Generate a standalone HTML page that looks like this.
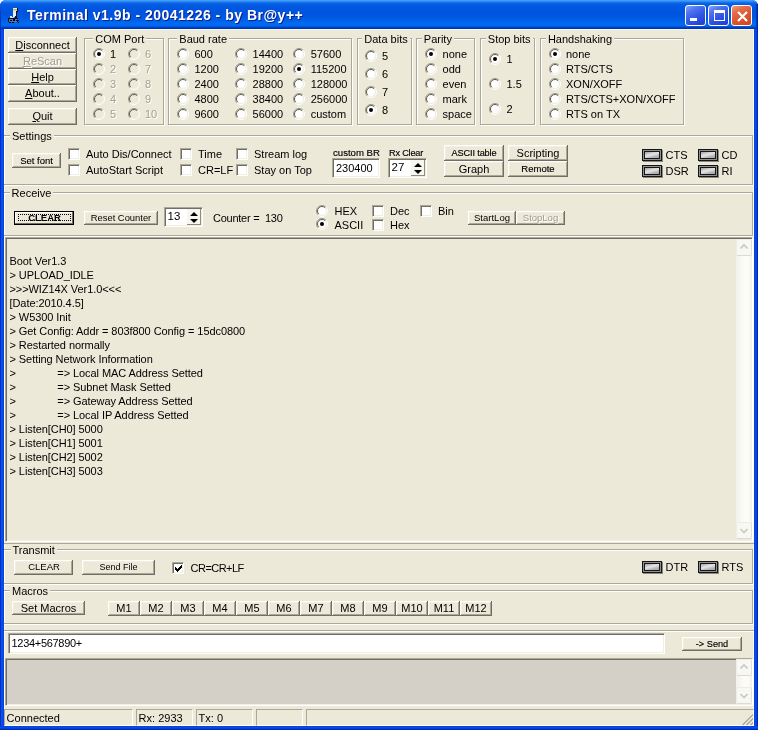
<!DOCTYPE html><html><head><meta charset="utf-8"><style>
*{margin:0;padding:0;box-sizing:border-box}
html,body{width:758px;height:730px;overflow:hidden;background:#fff}
body{position:relative;font-family:'Liberation Sans', sans-serif;font-size:11px;color:#000}
div{position:absolute}
.t{white-space:pre;line-height:14px}
.gb{border:1px solid #ACA899;box-shadow:1px 1px 0 #fff, inset 1px 1px 0 #fff}
.gl{background:#ECE9D8;padding:0 2px;line-height:11px;height:11px;white-space:pre}
.btn{background:#ECE9D8;box-shadow:inset -1px -1px 0 #716F64, inset 1px 1px 0 #fff, inset -2px -2px 0 #ACA899, inset 2px 2px 0 #F1EFE2;text-align:center;white-space:pre}
.rs{position:absolute}
.rad{width:12px;height:12px;border-radius:50%;background:#fff;box-shadow:inset 1px 1px 0 #716F64;border:1px solid;border-color:#ACA899 #fff #fff #ACA899}
.rdot{left:3px;top:3px;width:4px;height:4px;border-radius:50%;background:#000}
.chk{width:12px;height:12px;background:#fff;border:1px solid;border-color:#ACA899 #fff #fff #ACA899;box-shadow:inset 1px 1px 0 #716F64, inset -1px -1px 0 #F1EFE2}
.ed{border:1px solid;border-color:#ACA899 #fff #fff #ACA899;box-shadow:inset 1px 1px 0 #716F64, inset -1px -1px 0 #F1EFE2;overflow:hidden}
.spn{background:#F7F6F1;box-shadow:inset -1px -1px 0 #8E8C80}
.led{background:#141414;box-shadow:1px 1px 0 rgba(40,40,40,0.5)}
.ledi{left:1px;top:1px;right:1px;bottom:1px;border:1px solid #909090;background:linear-gradient(165deg,#8c8c8c 0%,#c8c8c8 30%,#e6e6e6 45%,#b4b4b4 70%,#a0a0a0 100%);box-shadow:inset 0 0 0 1px #181818}
.u{text-decoration:underline}
</style></head><body>
<div id="root" style="left:0;top:0;width:758px;height:730px;will-change:transform">

<div style="left:0;top:0;width:758px;height:730px;background:#0831D9;border-radius:6px 6px 0 0"></div>
<div style="left:0;top:0;width:758px;height:29px;border-radius:6px 6px 0 0;background:linear-gradient(#4AA3FA 0px,#3A95F8 1px,#1470EC 2.5px,#065DE3 4px,#0057E0 8px,#0053DC 13px,#0057E0 17px,#0063EA 21px,#006CF2 24px,#0066EC 26px,#0040C4 27.5px,#0030A8 29px)"></div>
<div style="left:4px;top:29px;width:750px;height:697px;background:#ECE9D8;box-shadow:inset 1px 1px 0 #FAF9F4, inset -1px -1px 0 #FAF9F4"></div>
<div style="left:0;top:4px;width:1px;height:25px;background:linear-gradient(#1a5ae8,#0838C8 40%,#0030B8)"></div>
<div style="left:756px;top:4px;width:2px;height:25px;background:linear-gradient(90deg,#0040D0,#0020A0)"></div>
<svg style="position:absolute;left:4px;top:4px" width="22" height="22" viewBox="0 0 22 22" shape-rendering="crispEdges">
<rect x="9" y="4" width="4" height="1" fill="#D8F0F8"/>
<rect x="9" y="5" width="4" height="1" fill="#C8B860"/>
<rect x="9" y="6" width="4" height="1" fill="#E8D8A0"/>
<rect x="9" y="7" width="3" height="2" fill="#F0E8D8"/>
<rect x="13" y="4" width="1" height="4" fill="#101028"/>
<rect x="12" y="7" width="1" height="5" fill="#101028"/>
<rect x="9" y="9" width="3" height="4" fill="#E8F0F8"/>
<rect x="11" y="12" width="2" height="2" fill="#101028"/>
<rect x="6" y="13" width="4" height="1" fill="#C8D8E8"/>
<rect x="4" y="14" width="10" height="1" fill="#101028"/>
<rect x="4" y="15" width="1" height="3" fill="#101028"/>
<rect x="5" y="15" width="8" height="3" fill="#5878A8"/>
<rect x="6" y="16" width="2" height="1" fill="#000018"/>
<rect x="9" y="15" width="2" height="2" fill="#000018"/>
<rect x="12" y="16" width="3" height="1" fill="#101028"/>
<rect x="13" y="17" width="1" height="1" fill="#000018"/>
<rect x="5" y="18" width="2" height="1" fill="#000018"/>
<rect x="8" y="18" width="2" height="1" fill="#000018"/>
<rect x="14" y="18" width="1" height="1" fill="#000018"/>
<rect x="6" y="12" width="2" height="1" fill="#E0E8F0"/>
</svg>
<div class="t" style="left:27px;top:6px;font-size:14px;letter-spacing:0.5px;font-weight:bold;color:#fff;line-height:18px;text-shadow:1px 1px 0 #0A1E8C">Terminal v1.9b - 20041226 - by Br@y++</div>
<div style="left:685px;top:5px;width:21px;height:21px;border:1px solid #fff;border-radius:3px;background:linear-gradient(150deg,#8AA6F8 0%,#5276F0 25%,#3258E6 55%,#2446DA 85%,#2040D0 100%)"><div style="left:4px;top:12px;width:7px;height:3px;background:#fff"></div></div>
<div style="left:708px;top:5px;width:21px;height:21px;border:1px solid #fff;border-radius:3px;background:linear-gradient(150deg,#8AA6F8 0%,#5276F0 25%,#3258E6 55%,#2446DA 85%,#2040D0 100%)"><div style="left:5px;top:4px;width:11px;height:11px;border:1px solid #fff;border-top-width:3px"></div></div>
<div style="left:731px;top:5px;width:21px;height:21px;border:1px solid #fff;border-radius:3px;background:linear-gradient(150deg,#F0A080 0%,#E6704C 25%,#DC5632 55%,#CC4420 100%)"><svg width="21" height="21" style="position:absolute;left:0;top:0"><path d="M6 6 L15 15 M15 6 L6 15" stroke="#fff" stroke-width="2.2"/></svg></div>
<div class="btn" style="left:8px;top:37px;width:69px;height:16px;line-height:16px;font-size:11px;color:#000;"><span class="u">D</span>isconnect</div>
<div class="btn" style="left:8px;top:53px;width:69px;height:16px;line-height:16px;font-size:11px;color:#A09D90;text-shadow:1px 1px #fff;"><span class="u">R</span>eScan</div>
<div class="btn" style="left:8px;top:69px;width:69px;height:16px;line-height:16px;font-size:11px;color:#000;"><span class="u">H</span>elp</div>
<div class="btn" style="left:8px;top:85px;width:69px;height:17px;line-height:17px;font-size:11px;color:#000;"><span class="u">A</span>bout..</div>
<div class="btn" style="left:8px;top:108px;width:69px;height:17px;line-height:17px;font-size:11px;color:#000;"><span class="u">Q</span>uit</div>
<div class="gb" style="left:84px;top:38px;width:80px;height:87px"></div>
<div class="gl" style="left:93.3px;top:34.2px">COM Port</div>
<svg class="rs" style="left:93px;top:48px" width="12" height="12"><circle cx="6" cy="6" r="4.5" fill="#fff"/><path d="M2.1 9.9A5.5 5.5 0 0 1 9.9 2.1" stroke="#9C998C" fill="none"/><path d="M2.8 9.2A4.5 4.5 0 0 1 9.2 2.8" stroke="#5F5D53" fill="none"/><path d="M9.9 2.1A5.5 5.5 0 0 1 2.1 9.9" stroke="#fff" fill="none"/><path d="M9.2 2.8A4.5 4.5 0 0 1 2.8 9.2" stroke="#F1EFE2" fill="none"/><circle cx="6" cy="6" r="2" fill="#000"/></svg>
<div class="t" style="left:110px;top:46.8px;line-height:14px;font-size:11px;color:#000;">1</div>
<svg class="rs" style="left:128px;top:48px" width="12" height="12"><circle cx="6" cy="6" r="4.5" fill="#ECE9D8"/><path d="M2.1 9.9A5.5 5.5 0 0 1 9.9 2.1" stroke="#9C998C" fill="none"/><path d="M2.8 9.2A4.5 4.5 0 0 1 9.2 2.8" stroke="#5F5D53" fill="none"/><path d="M9.9 2.1A5.5 5.5 0 0 1 2.1 9.9" stroke="#fff" fill="none"/><path d="M9.2 2.8A4.5 4.5 0 0 1 2.8 9.2" stroke="#F1EFE2" fill="none"/></svg>
<div class="t" style="left:145px;top:46.8px;line-height:14px;font-size:11px;color:#A5A295;text-shadow:1px 1px #fff">6</div>
<svg class="rs" style="left:93px;top:63px" width="12" height="12"><circle cx="6" cy="6" r="4.5" fill="#ECE9D8"/><path d="M2.1 9.9A5.5 5.5 0 0 1 9.9 2.1" stroke="#9C998C" fill="none"/><path d="M2.8 9.2A4.5 4.5 0 0 1 9.2 2.8" stroke="#5F5D53" fill="none"/><path d="M9.9 2.1A5.5 5.5 0 0 1 2.1 9.9" stroke="#fff" fill="none"/><path d="M9.2 2.8A4.5 4.5 0 0 1 2.8 9.2" stroke="#F1EFE2" fill="none"/></svg>
<div class="t" style="left:110px;top:61.8px;line-height:14px;font-size:11px;color:#A5A295;text-shadow:1px 1px #fff">2</div>
<svg class="rs" style="left:128px;top:63px" width="12" height="12"><circle cx="6" cy="6" r="4.5" fill="#ECE9D8"/><path d="M2.1 9.9A5.5 5.5 0 0 1 9.9 2.1" stroke="#9C998C" fill="none"/><path d="M2.8 9.2A4.5 4.5 0 0 1 9.2 2.8" stroke="#5F5D53" fill="none"/><path d="M9.9 2.1A5.5 5.5 0 0 1 2.1 9.9" stroke="#fff" fill="none"/><path d="M9.2 2.8A4.5 4.5 0 0 1 2.8 9.2" stroke="#F1EFE2" fill="none"/></svg>
<div class="t" style="left:145px;top:61.8px;line-height:14px;font-size:11px;color:#A5A295;text-shadow:1px 1px #fff">7</div>
<svg class="rs" style="left:93px;top:78px" width="12" height="12"><circle cx="6" cy="6" r="4.5" fill="#ECE9D8"/><path d="M2.1 9.9A5.5 5.5 0 0 1 9.9 2.1" stroke="#9C998C" fill="none"/><path d="M2.8 9.2A4.5 4.5 0 0 1 9.2 2.8" stroke="#5F5D53" fill="none"/><path d="M9.9 2.1A5.5 5.5 0 0 1 2.1 9.9" stroke="#fff" fill="none"/><path d="M9.2 2.8A4.5 4.5 0 0 1 2.8 9.2" stroke="#F1EFE2" fill="none"/></svg>
<div class="t" style="left:110px;top:76.7px;line-height:14px;font-size:11px;color:#A5A295;text-shadow:1px 1px #fff">3</div>
<svg class="rs" style="left:128px;top:78px" width="12" height="12"><circle cx="6" cy="6" r="4.5" fill="#ECE9D8"/><path d="M2.1 9.9A5.5 5.5 0 0 1 9.9 2.1" stroke="#9C998C" fill="none"/><path d="M2.8 9.2A4.5 4.5 0 0 1 9.2 2.8" stroke="#5F5D53" fill="none"/><path d="M9.9 2.1A5.5 5.5 0 0 1 2.1 9.9" stroke="#fff" fill="none"/><path d="M9.2 2.8A4.5 4.5 0 0 1 2.8 9.2" stroke="#F1EFE2" fill="none"/></svg>
<div class="t" style="left:145px;top:76.7px;line-height:14px;font-size:11px;color:#A5A295;text-shadow:1px 1px #fff">8</div>
<svg class="rs" style="left:93px;top:93px" width="12" height="12"><circle cx="6" cy="6" r="4.5" fill="#ECE9D8"/><path d="M2.1 9.9A5.5 5.5 0 0 1 9.9 2.1" stroke="#9C998C" fill="none"/><path d="M2.8 9.2A4.5 4.5 0 0 1 9.2 2.8" stroke="#5F5D53" fill="none"/><path d="M9.9 2.1A5.5 5.5 0 0 1 2.1 9.9" stroke="#fff" fill="none"/><path d="M9.2 2.8A4.5 4.5 0 0 1 2.8 9.2" stroke="#F1EFE2" fill="none"/></svg>
<div class="t" style="left:110px;top:91.6px;line-height:14px;font-size:11px;color:#A5A295;text-shadow:1px 1px #fff">4</div>
<svg class="rs" style="left:128px;top:93px" width="12" height="12"><circle cx="6" cy="6" r="4.5" fill="#ECE9D8"/><path d="M2.1 9.9A5.5 5.5 0 0 1 9.9 2.1" stroke="#9C998C" fill="none"/><path d="M2.8 9.2A4.5 4.5 0 0 1 9.2 2.8" stroke="#5F5D53" fill="none"/><path d="M9.9 2.1A5.5 5.5 0 0 1 2.1 9.9" stroke="#fff" fill="none"/><path d="M9.2 2.8A4.5 4.5 0 0 1 2.8 9.2" stroke="#F1EFE2" fill="none"/></svg>
<div class="t" style="left:145px;top:91.6px;line-height:14px;font-size:11px;color:#A5A295;text-shadow:1px 1px #fff">9</div>
<svg class="rs" style="left:93px;top:108px" width="12" height="12"><circle cx="6" cy="6" r="4.5" fill="#ECE9D8"/><path d="M2.1 9.9A5.5 5.5 0 0 1 9.9 2.1" stroke="#9C998C" fill="none"/><path d="M2.8 9.2A4.5 4.5 0 0 1 9.2 2.8" stroke="#5F5D53" fill="none"/><path d="M9.9 2.1A5.5 5.5 0 0 1 2.1 9.9" stroke="#fff" fill="none"/><path d="M9.2 2.8A4.5 4.5 0 0 1 2.8 9.2" stroke="#F1EFE2" fill="none"/></svg>
<div class="t" style="left:110px;top:106.5px;line-height:14px;font-size:11px;color:#A5A295;text-shadow:1px 1px #fff">5</div>
<svg class="rs" style="left:128px;top:108px" width="12" height="12"><circle cx="6" cy="6" r="4.5" fill="#ECE9D8"/><path d="M2.1 9.9A5.5 5.5 0 0 1 9.9 2.1" stroke="#9C998C" fill="none"/><path d="M2.8 9.2A4.5 4.5 0 0 1 9.2 2.8" stroke="#5F5D53" fill="none"/><path d="M9.9 2.1A5.5 5.5 0 0 1 2.1 9.9" stroke="#fff" fill="none"/><path d="M9.2 2.8A4.5 4.5 0 0 1 2.8 9.2" stroke="#F1EFE2" fill="none"/></svg>
<div class="t" style="left:145px;top:106.5px;line-height:14px;font-size:11px;color:#A5A295;text-shadow:1px 1px #fff">10</div>
<div class="gb" style="left:168px;top:38px;width:184px;height:87px"></div>
<div class="gl" style="left:177.3px;top:34.2px">Baud rate</div>
<svg class="rs" style="left:177px;top:48px" width="12" height="12"><circle cx="6" cy="6" r="4.5" fill="#fff"/><path d="M2.1 9.9A5.5 5.5 0 0 1 9.9 2.1" stroke="#9C998C" fill="none"/><path d="M2.8 9.2A4.5 4.5 0 0 1 9.2 2.8" stroke="#5F5D53" fill="none"/><path d="M9.9 2.1A5.5 5.5 0 0 1 2.1 9.9" stroke="#fff" fill="none"/><path d="M9.2 2.8A4.5 4.5 0 0 1 2.8 9.2" stroke="#F1EFE2" fill="none"/></svg>
<div class="t" style="left:194.5px;top:46.8px;line-height:14px;font-size:11px;color:#000;">600</div>
<svg class="rs" style="left:177px;top:63px" width="12" height="12"><circle cx="6" cy="6" r="4.5" fill="#fff"/><path d="M2.1 9.9A5.5 5.5 0 0 1 9.9 2.1" stroke="#9C998C" fill="none"/><path d="M2.8 9.2A4.5 4.5 0 0 1 9.2 2.8" stroke="#5F5D53" fill="none"/><path d="M9.9 2.1A5.5 5.5 0 0 1 2.1 9.9" stroke="#fff" fill="none"/><path d="M9.2 2.8A4.5 4.5 0 0 1 2.8 9.2" stroke="#F1EFE2" fill="none"/></svg>
<div class="t" style="left:194.5px;top:61.8px;line-height:14px;font-size:11px;color:#000;">1200</div>
<svg class="rs" style="left:177px;top:78px" width="12" height="12"><circle cx="6" cy="6" r="4.5" fill="#fff"/><path d="M2.1 9.9A5.5 5.5 0 0 1 9.9 2.1" stroke="#9C998C" fill="none"/><path d="M2.8 9.2A4.5 4.5 0 0 1 9.2 2.8" stroke="#5F5D53" fill="none"/><path d="M9.9 2.1A5.5 5.5 0 0 1 2.1 9.9" stroke="#fff" fill="none"/><path d="M9.2 2.8A4.5 4.5 0 0 1 2.8 9.2" stroke="#F1EFE2" fill="none"/></svg>
<div class="t" style="left:194.5px;top:76.7px;line-height:14px;font-size:11px;color:#000;">2400</div>
<svg class="rs" style="left:177px;top:93px" width="12" height="12"><circle cx="6" cy="6" r="4.5" fill="#fff"/><path d="M2.1 9.9A5.5 5.5 0 0 1 9.9 2.1" stroke="#9C998C" fill="none"/><path d="M2.8 9.2A4.5 4.5 0 0 1 9.2 2.8" stroke="#5F5D53" fill="none"/><path d="M9.9 2.1A5.5 5.5 0 0 1 2.1 9.9" stroke="#fff" fill="none"/><path d="M9.2 2.8A4.5 4.5 0 0 1 2.8 9.2" stroke="#F1EFE2" fill="none"/></svg>
<div class="t" style="left:194.5px;top:91.6px;line-height:14px;font-size:11px;color:#000;">4800</div>
<svg class="rs" style="left:177px;top:108px" width="12" height="12"><circle cx="6" cy="6" r="4.5" fill="#fff"/><path d="M2.1 9.9A5.5 5.5 0 0 1 9.9 2.1" stroke="#9C998C" fill="none"/><path d="M2.8 9.2A4.5 4.5 0 0 1 9.2 2.8" stroke="#5F5D53" fill="none"/><path d="M9.9 2.1A5.5 5.5 0 0 1 2.1 9.9" stroke="#fff" fill="none"/><path d="M9.2 2.8A4.5 4.5 0 0 1 2.8 9.2" stroke="#F1EFE2" fill="none"/></svg>
<div class="t" style="left:194.5px;top:106.5px;line-height:14px;font-size:11px;color:#000;">9600</div>
<svg class="rs" style="left:235px;top:48px" width="12" height="12"><circle cx="6" cy="6" r="4.5" fill="#fff"/><path d="M2.1 9.9A5.5 5.5 0 0 1 9.9 2.1" stroke="#9C998C" fill="none"/><path d="M2.8 9.2A4.5 4.5 0 0 1 9.2 2.8" stroke="#5F5D53" fill="none"/><path d="M9.9 2.1A5.5 5.5 0 0 1 2.1 9.9" stroke="#fff" fill="none"/><path d="M9.2 2.8A4.5 4.5 0 0 1 2.8 9.2" stroke="#F1EFE2" fill="none"/></svg>
<div class="t" style="left:252.6px;top:46.8px;line-height:14px;font-size:11px;color:#000;">14400</div>
<svg class="rs" style="left:235px;top:63px" width="12" height="12"><circle cx="6" cy="6" r="4.5" fill="#fff"/><path d="M2.1 9.9A5.5 5.5 0 0 1 9.9 2.1" stroke="#9C998C" fill="none"/><path d="M2.8 9.2A4.5 4.5 0 0 1 9.2 2.8" stroke="#5F5D53" fill="none"/><path d="M9.9 2.1A5.5 5.5 0 0 1 2.1 9.9" stroke="#fff" fill="none"/><path d="M9.2 2.8A4.5 4.5 0 0 1 2.8 9.2" stroke="#F1EFE2" fill="none"/></svg>
<div class="t" style="left:252.6px;top:61.8px;line-height:14px;font-size:11px;color:#000;">19200</div>
<svg class="rs" style="left:235px;top:78px" width="12" height="12"><circle cx="6" cy="6" r="4.5" fill="#fff"/><path d="M2.1 9.9A5.5 5.5 0 0 1 9.9 2.1" stroke="#9C998C" fill="none"/><path d="M2.8 9.2A4.5 4.5 0 0 1 9.2 2.8" stroke="#5F5D53" fill="none"/><path d="M9.9 2.1A5.5 5.5 0 0 1 2.1 9.9" stroke="#fff" fill="none"/><path d="M9.2 2.8A4.5 4.5 0 0 1 2.8 9.2" stroke="#F1EFE2" fill="none"/></svg>
<div class="t" style="left:252.6px;top:76.7px;line-height:14px;font-size:11px;color:#000;">28800</div>
<svg class="rs" style="left:235px;top:93px" width="12" height="12"><circle cx="6" cy="6" r="4.5" fill="#fff"/><path d="M2.1 9.9A5.5 5.5 0 0 1 9.9 2.1" stroke="#9C998C" fill="none"/><path d="M2.8 9.2A4.5 4.5 0 0 1 9.2 2.8" stroke="#5F5D53" fill="none"/><path d="M9.9 2.1A5.5 5.5 0 0 1 2.1 9.9" stroke="#fff" fill="none"/><path d="M9.2 2.8A4.5 4.5 0 0 1 2.8 9.2" stroke="#F1EFE2" fill="none"/></svg>
<div class="t" style="left:252.6px;top:91.6px;line-height:14px;font-size:11px;color:#000;">38400</div>
<svg class="rs" style="left:235px;top:108px" width="12" height="12"><circle cx="6" cy="6" r="4.5" fill="#fff"/><path d="M2.1 9.9A5.5 5.5 0 0 1 9.9 2.1" stroke="#9C998C" fill="none"/><path d="M2.8 9.2A4.5 4.5 0 0 1 9.2 2.8" stroke="#5F5D53" fill="none"/><path d="M9.9 2.1A5.5 5.5 0 0 1 2.1 9.9" stroke="#fff" fill="none"/><path d="M9.2 2.8A4.5 4.5 0 0 1 2.8 9.2" stroke="#F1EFE2" fill="none"/></svg>
<div class="t" style="left:252.6px;top:106.5px;line-height:14px;font-size:11px;color:#000;">56000</div>
<svg class="rs" style="left:293px;top:48px" width="12" height="12"><circle cx="6" cy="6" r="4.5" fill="#fff"/><path d="M2.1 9.9A5.5 5.5 0 0 1 9.9 2.1" stroke="#9C998C" fill="none"/><path d="M2.8 9.2A4.5 4.5 0 0 1 9.2 2.8" stroke="#5F5D53" fill="none"/><path d="M9.9 2.1A5.5 5.5 0 0 1 2.1 9.9" stroke="#fff" fill="none"/><path d="M9.2 2.8A4.5 4.5 0 0 1 2.8 9.2" stroke="#F1EFE2" fill="none"/></svg>
<div class="t" style="left:310.7px;top:46.8px;line-height:14px;font-size:11px;color:#000;">57600</div>
<svg class="rs" style="left:293px;top:63px" width="12" height="12"><circle cx="6" cy="6" r="4.5" fill="#fff"/><path d="M2.1 9.9A5.5 5.5 0 0 1 9.9 2.1" stroke="#9C998C" fill="none"/><path d="M2.8 9.2A4.5 4.5 0 0 1 9.2 2.8" stroke="#5F5D53" fill="none"/><path d="M9.9 2.1A5.5 5.5 0 0 1 2.1 9.9" stroke="#fff" fill="none"/><path d="M9.2 2.8A4.5 4.5 0 0 1 2.8 9.2" stroke="#F1EFE2" fill="none"/><circle cx="6" cy="6" r="2" fill="#000"/></svg>
<div class="t" style="left:310.7px;top:61.8px;line-height:14px;font-size:11px;color:#000;">115200</div>
<svg class="rs" style="left:293px;top:78px" width="12" height="12"><circle cx="6" cy="6" r="4.5" fill="#fff"/><path d="M2.1 9.9A5.5 5.5 0 0 1 9.9 2.1" stroke="#9C998C" fill="none"/><path d="M2.8 9.2A4.5 4.5 0 0 1 9.2 2.8" stroke="#5F5D53" fill="none"/><path d="M9.9 2.1A5.5 5.5 0 0 1 2.1 9.9" stroke="#fff" fill="none"/><path d="M9.2 2.8A4.5 4.5 0 0 1 2.8 9.2" stroke="#F1EFE2" fill="none"/></svg>
<div class="t" style="left:310.7px;top:76.7px;line-height:14px;font-size:11px;color:#000;">128000</div>
<svg class="rs" style="left:293px;top:93px" width="12" height="12"><circle cx="6" cy="6" r="4.5" fill="#fff"/><path d="M2.1 9.9A5.5 5.5 0 0 1 9.9 2.1" stroke="#9C998C" fill="none"/><path d="M2.8 9.2A4.5 4.5 0 0 1 9.2 2.8" stroke="#5F5D53" fill="none"/><path d="M9.9 2.1A5.5 5.5 0 0 1 2.1 9.9" stroke="#fff" fill="none"/><path d="M9.2 2.8A4.5 4.5 0 0 1 2.8 9.2" stroke="#F1EFE2" fill="none"/></svg>
<div class="t" style="left:310.7px;top:91.6px;line-height:14px;font-size:11px;color:#000;">256000</div>
<svg class="rs" style="left:293px;top:108px" width="12" height="12"><circle cx="6" cy="6" r="4.5" fill="#fff"/><path d="M2.1 9.9A5.5 5.5 0 0 1 9.9 2.1" stroke="#9C998C" fill="none"/><path d="M2.8 9.2A4.5 4.5 0 0 1 9.2 2.8" stroke="#5F5D53" fill="none"/><path d="M9.9 2.1A5.5 5.5 0 0 1 2.1 9.9" stroke="#fff" fill="none"/><path d="M9.2 2.8A4.5 4.5 0 0 1 2.8 9.2" stroke="#F1EFE2" fill="none"/></svg>
<div class="t" style="left:310.7px;top:106.5px;line-height:14px;font-size:11px;color:#000;">custom</div>
<div class="gb" style="left:357px;top:38px;width:55px;height:87px"></div>
<div class="gl" style="left:362.3px;top:34.2px">Data bits</div>
<svg class="rs" style="left:365px;top:50px" width="12" height="12"><circle cx="6" cy="6" r="4.5" fill="#fff"/><path d="M2.1 9.9A5.5 5.5 0 0 1 9.9 2.1" stroke="#9C998C" fill="none"/><path d="M2.8 9.2A4.5 4.5 0 0 1 9.2 2.8" stroke="#5F5D53" fill="none"/><path d="M9.9 2.1A5.5 5.5 0 0 1 2.1 9.9" stroke="#fff" fill="none"/><path d="M9.2 2.8A4.5 4.5 0 0 1 2.8 9.2" stroke="#F1EFE2" fill="none"/></svg>
<div class="t" style="left:382px;top:48.6px;line-height:14px;font-size:11px;color:#000;">5</div>
<svg class="rs" style="left:365px;top:68px" width="12" height="12"><circle cx="6" cy="6" r="4.5" fill="#fff"/><path d="M2.1 9.9A5.5 5.5 0 0 1 9.9 2.1" stroke="#9C998C" fill="none"/><path d="M2.8 9.2A4.5 4.5 0 0 1 9.2 2.8" stroke="#5F5D53" fill="none"/><path d="M9.9 2.1A5.5 5.5 0 0 1 2.1 9.9" stroke="#fff" fill="none"/><path d="M9.2 2.8A4.5 4.5 0 0 1 2.8 9.2" stroke="#F1EFE2" fill="none"/></svg>
<div class="t" style="left:382px;top:67.2px;line-height:14px;font-size:11px;color:#000;">6</div>
<svg class="rs" style="left:365px;top:86px" width="12" height="12"><circle cx="6" cy="6" r="4.5" fill="#fff"/><path d="M2.1 9.9A5.5 5.5 0 0 1 9.9 2.1" stroke="#9C998C" fill="none"/><path d="M2.8 9.2A4.5 4.5 0 0 1 9.2 2.8" stroke="#5F5D53" fill="none"/><path d="M9.9 2.1A5.5 5.5 0 0 1 2.1 9.9" stroke="#fff" fill="none"/><path d="M9.2 2.8A4.5 4.5 0 0 1 2.8 9.2" stroke="#F1EFE2" fill="none"/></svg>
<div class="t" style="left:382px;top:85.0px;line-height:14px;font-size:11px;color:#000;">7</div>
<svg class="rs" style="left:365px;top:104px" width="12" height="12"><circle cx="6" cy="6" r="4.5" fill="#fff"/><path d="M2.1 9.9A5.5 5.5 0 0 1 9.9 2.1" stroke="#9C998C" fill="none"/><path d="M2.8 9.2A4.5 4.5 0 0 1 9.2 2.8" stroke="#5F5D53" fill="none"/><path d="M9.9 2.1A5.5 5.5 0 0 1 2.1 9.9" stroke="#fff" fill="none"/><path d="M9.2 2.8A4.5 4.5 0 0 1 2.8 9.2" stroke="#F1EFE2" fill="none"/><circle cx="6" cy="6" r="2" fill="#000"/></svg>
<div class="t" style="left:382px;top:102.6px;line-height:14px;font-size:11px;color:#000;">8</div>
<div class="gb" style="left:416px;top:38px;width:59px;height:87px"></div>
<div class="gl" style="left:421.8px;top:34.2px">Parity</div>
<svg class="rs" style="left:425px;top:48px" width="12" height="12"><circle cx="6" cy="6" r="4.5" fill="#fff"/><path d="M2.1 9.9A5.5 5.5 0 0 1 9.9 2.1" stroke="#9C998C" fill="none"/><path d="M2.8 9.2A4.5 4.5 0 0 1 9.2 2.8" stroke="#5F5D53" fill="none"/><path d="M9.9 2.1A5.5 5.5 0 0 1 2.1 9.9" stroke="#fff" fill="none"/><path d="M9.2 2.8A4.5 4.5 0 0 1 2.8 9.2" stroke="#F1EFE2" fill="none"/><circle cx="6" cy="6" r="2" fill="#000"/></svg>
<div class="t" style="left:442.6px;top:46.8px;line-height:14px;font-size:11px;color:#000;">none</div>
<svg class="rs" style="left:425px;top:63px" width="12" height="12"><circle cx="6" cy="6" r="4.5" fill="#fff"/><path d="M2.1 9.9A5.5 5.5 0 0 1 9.9 2.1" stroke="#9C998C" fill="none"/><path d="M2.8 9.2A4.5 4.5 0 0 1 9.2 2.8" stroke="#5F5D53" fill="none"/><path d="M9.9 2.1A5.5 5.5 0 0 1 2.1 9.9" stroke="#fff" fill="none"/><path d="M9.2 2.8A4.5 4.5 0 0 1 2.8 9.2" stroke="#F1EFE2" fill="none"/></svg>
<div class="t" style="left:442.6px;top:61.8px;line-height:14px;font-size:11px;color:#000;">odd</div>
<svg class="rs" style="left:425px;top:78px" width="12" height="12"><circle cx="6" cy="6" r="4.5" fill="#fff"/><path d="M2.1 9.9A5.5 5.5 0 0 1 9.9 2.1" stroke="#9C998C" fill="none"/><path d="M2.8 9.2A4.5 4.5 0 0 1 9.2 2.8" stroke="#5F5D53" fill="none"/><path d="M9.9 2.1A5.5 5.5 0 0 1 2.1 9.9" stroke="#fff" fill="none"/><path d="M9.2 2.8A4.5 4.5 0 0 1 2.8 9.2" stroke="#F1EFE2" fill="none"/></svg>
<div class="t" style="left:442.6px;top:76.7px;line-height:14px;font-size:11px;color:#000;">even</div>
<svg class="rs" style="left:425px;top:93px" width="12" height="12"><circle cx="6" cy="6" r="4.5" fill="#fff"/><path d="M2.1 9.9A5.5 5.5 0 0 1 9.9 2.1" stroke="#9C998C" fill="none"/><path d="M2.8 9.2A4.5 4.5 0 0 1 9.2 2.8" stroke="#5F5D53" fill="none"/><path d="M9.9 2.1A5.5 5.5 0 0 1 2.1 9.9" stroke="#fff" fill="none"/><path d="M9.2 2.8A4.5 4.5 0 0 1 2.8 9.2" stroke="#F1EFE2" fill="none"/></svg>
<div class="t" style="left:442.6px;top:91.6px;line-height:14px;font-size:11px;color:#000;">mark</div>
<svg class="rs" style="left:425px;top:108px" width="12" height="12"><circle cx="6" cy="6" r="4.5" fill="#fff"/><path d="M2.1 9.9A5.5 5.5 0 0 1 9.9 2.1" stroke="#9C998C" fill="none"/><path d="M2.8 9.2A4.5 4.5 0 0 1 9.2 2.8" stroke="#5F5D53" fill="none"/><path d="M9.9 2.1A5.5 5.5 0 0 1 2.1 9.9" stroke="#fff" fill="none"/><path d="M9.2 2.8A4.5 4.5 0 0 1 2.8 9.2" stroke="#F1EFE2" fill="none"/></svg>
<div class="t" style="left:442.6px;top:106.5px;line-height:14px;font-size:11px;color:#000;">space</div>
<div class="gb" style="left:480px;top:38px;width:55px;height:87px"></div>
<div class="gl" style="left:485.8px;top:34.2px">Stop bits</div>
<svg class="rs" style="left:489px;top:53px" width="12" height="12"><circle cx="6" cy="6" r="4.5" fill="#fff"/><path d="M2.1 9.9A5.5 5.5 0 0 1 9.9 2.1" stroke="#9C998C" fill="none"/><path d="M2.8 9.2A4.5 4.5 0 0 1 9.2 2.8" stroke="#5F5D53" fill="none"/><path d="M9.9 2.1A5.5 5.5 0 0 1 2.1 9.9" stroke="#fff" fill="none"/><path d="M9.2 2.8A4.5 4.5 0 0 1 2.8 9.2" stroke="#F1EFE2" fill="none"/><circle cx="6" cy="6" r="2" fill="#000"/></svg>
<div class="t" style="left:506.5px;top:51.6px;line-height:14px;font-size:11px;color:#000;">1</div>
<svg class="rs" style="left:489px;top:78px" width="12" height="12"><circle cx="6" cy="6" r="4.5" fill="#fff"/><path d="M2.1 9.9A5.5 5.5 0 0 1 9.9 2.1" stroke="#9C998C" fill="none"/><path d="M2.8 9.2A4.5 4.5 0 0 1 9.2 2.8" stroke="#5F5D53" fill="none"/><path d="M9.9 2.1A5.5 5.5 0 0 1 2.1 9.9" stroke="#fff" fill="none"/><path d="M9.2 2.8A4.5 4.5 0 0 1 2.8 9.2" stroke="#F1EFE2" fill="none"/></svg>
<div class="t" style="left:506.5px;top:76.6px;line-height:14px;font-size:11px;color:#000;">1.5</div>
<svg class="rs" style="left:489px;top:103px" width="12" height="12"><circle cx="6" cy="6" r="4.5" fill="#fff"/><path d="M2.1 9.9A5.5 5.5 0 0 1 9.9 2.1" stroke="#9C998C" fill="none"/><path d="M2.8 9.2A4.5 4.5 0 0 1 9.2 2.8" stroke="#5F5D53" fill="none"/><path d="M9.9 2.1A5.5 5.5 0 0 1 2.1 9.9" stroke="#fff" fill="none"/><path d="M9.2 2.8A4.5 4.5 0 0 1 2.8 9.2" stroke="#F1EFE2" fill="none"/></svg>
<div class="t" style="left:506.5px;top:101.7px;line-height:14px;font-size:11px;color:#000;">2</div>
<div class="gb" style="left:540px;top:38px;width:144px;height:87px"></div>
<div class="gl" style="left:545.9px;top:34.2px">Handshaking</div>
<svg class="rs" style="left:549px;top:48px" width="12" height="12"><circle cx="6" cy="6" r="4.5" fill="#fff"/><path d="M2.1 9.9A5.5 5.5 0 0 1 9.9 2.1" stroke="#9C998C" fill="none"/><path d="M2.8 9.2A4.5 4.5 0 0 1 9.2 2.8" stroke="#5F5D53" fill="none"/><path d="M9.9 2.1A5.5 5.5 0 0 1 2.1 9.9" stroke="#fff" fill="none"/><path d="M9.2 2.8A4.5 4.5 0 0 1 2.8 9.2" stroke="#F1EFE2" fill="none"/><circle cx="6" cy="6" r="2" fill="#000"/></svg>
<div class="t" style="left:566px;top:46.8px;line-height:14px;font-size:11px;color:#000;">none</div>
<svg class="rs" style="left:549px;top:63px" width="12" height="12"><circle cx="6" cy="6" r="4.5" fill="#fff"/><path d="M2.1 9.9A5.5 5.5 0 0 1 9.9 2.1" stroke="#9C998C" fill="none"/><path d="M2.8 9.2A4.5 4.5 0 0 1 9.2 2.8" stroke="#5F5D53" fill="none"/><path d="M9.9 2.1A5.5 5.5 0 0 1 2.1 9.9" stroke="#fff" fill="none"/><path d="M9.2 2.8A4.5 4.5 0 0 1 2.8 9.2" stroke="#F1EFE2" fill="none"/></svg>
<div class="t" style="left:566px;top:61.8px;line-height:14px;font-size:11px;color:#000;">RTS/CTS</div>
<svg class="rs" style="left:549px;top:78px" width="12" height="12"><circle cx="6" cy="6" r="4.5" fill="#fff"/><path d="M2.1 9.9A5.5 5.5 0 0 1 9.9 2.1" stroke="#9C998C" fill="none"/><path d="M2.8 9.2A4.5 4.5 0 0 1 9.2 2.8" stroke="#5F5D53" fill="none"/><path d="M9.9 2.1A5.5 5.5 0 0 1 2.1 9.9" stroke="#fff" fill="none"/><path d="M9.2 2.8A4.5 4.5 0 0 1 2.8 9.2" stroke="#F1EFE2" fill="none"/></svg>
<div class="t" style="left:566px;top:76.7px;line-height:14px;font-size:11px;color:#000;">XON/XOFF</div>
<svg class="rs" style="left:549px;top:93px" width="12" height="12"><circle cx="6" cy="6" r="4.5" fill="#fff"/><path d="M2.1 9.9A5.5 5.5 0 0 1 9.9 2.1" stroke="#9C998C" fill="none"/><path d="M2.8 9.2A4.5 4.5 0 0 1 9.2 2.8" stroke="#5F5D53" fill="none"/><path d="M9.9 2.1A5.5 5.5 0 0 1 2.1 9.9" stroke="#fff" fill="none"/><path d="M9.2 2.8A4.5 4.5 0 0 1 2.8 9.2" stroke="#F1EFE2" fill="none"/></svg>
<div class="t" style="left:566px;top:91.6px;line-height:14px;font-size:11px;color:#000;">RTS/CTS+XON/XOFF</div>
<svg class="rs" style="left:549px;top:108px" width="12" height="12"><circle cx="6" cy="6" r="4.5" fill="#fff"/><path d="M2.1 9.9A5.5 5.5 0 0 1 9.9 2.1" stroke="#9C998C" fill="none"/><path d="M2.8 9.2A4.5 4.5 0 0 1 9.2 2.8" stroke="#5F5D53" fill="none"/><path d="M9.9 2.1A5.5 5.5 0 0 1 2.1 9.9" stroke="#fff" fill="none"/><path d="M9.2 2.8A4.5 4.5 0 0 1 2.8 9.2" stroke="#F1EFE2" fill="none"/></svg>
<div class="t" style="left:566px;top:106.5px;line-height:14px;font-size:11px;color:#000;">RTS on TX</div>
<div class="gb" style="left:3px;top:135px;width:750px;height:50px"></div>
<div class="gl" style="left:10.0px;top:131.2px">Settings</div>
<div class="btn" style="left:12px;top:153px;width:49px;height:15px;line-height:15px;font-size:9.5px;color:#000;-webkit-text-stroke:0.12px #000">Set font</div>
<div class="chk" style="left:68px;top:148px"></div>
<div class="t" style="left:86px;top:146.7px;line-height:14px;font-size:11px;color:#000;">Auto Dis/Connect</div>
<div class="chk" style="left:68px;top:164px"></div>
<div class="t" style="left:86px;top:162.7px;line-height:14px;font-size:11px;color:#000;">AutoStart Script</div>
<div class="chk" style="left:180px;top:148px"></div>
<div class="t" style="left:198px;top:146.7px;line-height:14px;font-size:11px;color:#000;">Time</div>
<div class="chk" style="left:180px;top:164px"></div>
<div class="t" style="left:198px;top:162.7px;line-height:14px;font-size:11px;color:#000;">CR=LF</div>
<div class="chk" style="left:236px;top:148px"></div>
<div class="t" style="left:254px;top:146.7px;line-height:14px;font-size:11px;color:#000;">Stream log</div>
<div class="chk" style="left:236px;top:164px"></div>
<div class="t" style="left:254px;top:162.7px;line-height:14px;font-size:11px;color:#000;">Stay on Top</div>
<div class="t" style="left:333px;top:145.7px;line-height:14px;font-size:9.6px;color:#000;-webkit-text-stroke:0.15px #000">custom BR</div>
<div class="ed" style="left:332px;top:158px;width:48px;height:20px;background:#fff"><div class="t" style="left:3px;top:-1.5px;line-height:20px;font-size:11px;">230400</div></div>
<div class="t" style="left:389px;top:145.7px;line-height:14px;font-size:9.2px;color:#000;-webkit-text-stroke:0.15px #000;letter-spacing:-0.2px">Rx Clear</div>
<div class="ed" style="left:388px;top:158px;width:39px;height:20px;background:#fff"><div class="t" style="left:2.5px;top:-2px;line-height:20px;font-size:11.5px">27</div></div>
<div class="spn" style="left:411px;top:160px;width:14px;height:16px"><svg width="14" height="16" style="position:absolute;left:0;top:0"><path d="M3 7 h8 l-4 -4 z" fill="#000"/><path d="M3 10 h8 l-4 4 z" fill="#000"/></svg></div>
<div class="btn" style="left:444px;top:145px;width:60px;height:16px;line-height:16px;font-size:9.2px;color:#000;-webkit-text-stroke:0.15px #000;letter-spacing:-0.15px">ASCII table</div>
<div class="btn" style="left:444px;top:161px;width:60px;height:16px;line-height:16px;font-size:11px;color:#000;">Graph</div>
<div class="btn" style="left:508px;top:145px;width:60px;height:16px;line-height:16px;font-size:11px;color:#000;">Scripting</div>
<div class="btn" style="left:508px;top:161px;width:60px;height:16px;line-height:16px;font-size:9.5px;color:#000;-webkit-text-stroke:0.15px #000">Remote</div>
<div class="led" style="left:642px;top:149px;width:20px;height:12px"><div class="ledi"></div></div>
<div class="t" style="left:665.5px;top:148.0px;line-height:14px;font-size:11px;color:#000;">CTS</div>
<div class="led" style="left:642px;top:165px;width:20px;height:12px"><div class="ledi"></div></div>
<div class="t" style="left:665.5px;top:164.0px;line-height:14px;font-size:11px;color:#000;">DSR</div>
<div class="led" style="left:698px;top:149px;width:20px;height:12px"><div class="ledi"></div></div>
<div class="t" style="left:721.5px;top:148.0px;line-height:14px;font-size:11px;color:#000;">CD</div>
<div class="led" style="left:698px;top:165px;width:20px;height:12px"><div class="ledi"></div></div>
<div class="t" style="left:721.5px;top:164.0px;line-height:14px;font-size:11px;color:#000;">RI</div>
<div class="gb" style="left:3px;top:192px;width:750px;height:44px"></div>
<div class="gl" style="left:9.600000000000001px;top:188.2px">Receive</div>
<div class="btn" style="left:14px;top:211px;width:60px;height:14px;border:1px solid #000;box-shadow:inset -1px -1px 0 #716F64, inset 1px 1px 0 #fff"></div>
<div class="t" style="left:14.5px;top:210.5px;width:60px;height:14px;line-height:14px;text-align:center;font-size:9.5px;font-weight:bold">CLEAR</div>
<div style="left:18px;top:214px;width:53px;height:7px;border:1px dotted #000"></div>
<div class="btn" style="left:84px;top:211px;width:74px;height:14px;line-height:14px;font-size:9.4px;color:#000;">Reset Counter</div>
<div class="ed" style="left:164px;top:207px;width:39px;height:20px;background:#fff"><div class="t" style="left:2.5px;top:-2px;line-height:20px;font-size:11.5px">13</div></div>
<div class="spn" style="left:187px;top:209px;width:14px;height:16px"><svg width="14" height="16" style="position:absolute;left:0;top:0"><path d="M3 7 h8 l-4 -4 z" fill="#000"/><path d="M3 10 h8 l-4 4 z" fill="#000"/></svg></div>
<div class="t" style="left:213px;top:210.8px;line-height:14px;font-size:11px;color:#000;letter-spacing:-0.25px">Counter =  130</div>
<svg class="rs" style="left:316px;top:205px" width="12" height="12"><circle cx="6" cy="6" r="4.5" fill="#fff"/><path d="M2.1 9.9A5.5 5.5 0 0 1 9.9 2.1" stroke="#9C998C" fill="none"/><path d="M2.8 9.2A4.5 4.5 0 0 1 9.2 2.8" stroke="#5F5D53" fill="none"/><path d="M9.9 2.1A5.5 5.5 0 0 1 2.1 9.9" stroke="#fff" fill="none"/><path d="M9.2 2.8A4.5 4.5 0 0 1 2.8 9.2" stroke="#F1EFE2" fill="none"/></svg>
<div class="t" style="left:334.5px;top:204.0px;line-height:14px;font-size:11px;color:#000;">HEX</div>
<svg class="rs" style="left:316px;top:218px" width="12" height="12"><circle cx="6" cy="6" r="4.5" fill="#fff"/><path d="M2.1 9.9A5.5 5.5 0 0 1 9.9 2.1" stroke="#9C998C" fill="none"/><path d="M2.8 9.2A4.5 4.5 0 0 1 9.2 2.8" stroke="#5F5D53" fill="none"/><path d="M9.9 2.1A5.5 5.5 0 0 1 2.1 9.9" stroke="#fff" fill="none"/><path d="M9.2 2.8A4.5 4.5 0 0 1 2.8 9.2" stroke="#F1EFE2" fill="none"/><circle cx="6" cy="6" r="2" fill="#000"/></svg>
<div class="t" style="left:334.5px;top:217.7px;line-height:14px;font-size:11px;color:#000;">ASCII</div>
<div class="chk" style="left:372px;top:205px"></div>
<div class="t" style="left:390px;top:204.0px;line-height:14px;font-size:11px;color:#000;">Dec</div>
<div class="chk" style="left:372px;top:219px"></div>
<div class="t" style="left:390px;top:218.0px;line-height:14px;font-size:11px;color:#000;">Hex</div>
<div class="chk" style="left:420px;top:205px"></div>
<div class="t" style="left:438px;top:204.0px;line-height:14px;font-size:11px;color:#000;">Bin</div>
<div class="btn" style="left:468px;top:211px;width:48px;height:14px;line-height:14px;font-size:9.5px;color:#000;">StartLog</div>
<div class="btn" style="left:516px;top:211px;width:49px;height:14px;line-height:14px;font-size:9.5px;color:#A09D90;text-shadow:1px 1px #fff;">StopLog</div>
<div class="ed" style="left:5px;top:237px;width:748px;height:305px;background:#ECE9D8"></div>
<div class="t" style="left:9.5px;top:254.0px;line-height:14px;font-size:11px;color:#000;letter-spacing:-0.07px">Boot Ver1.3</div>
<div class="t" style="left:9.5px;top:268.0px;line-height:14px;font-size:11px;color:#000;letter-spacing:-0.07px">&gt; UPLOAD_IDLE</div>
<div class="t" style="left:9.5px;top:282.0px;line-height:14px;font-size:11px;color:#000;letter-spacing:-0.07px">&gt;&gt;&gt;WIZ14X Ver1.0&lt;&lt;&lt;</div>
<div class="t" style="left:9.5px;top:296.0px;line-height:14px;font-size:11px;color:#000;letter-spacing:-0.07px">[Date:2010.4.5]</div>
<div class="t" style="left:9.5px;top:310.0px;line-height:14px;font-size:11px;color:#000;letter-spacing:-0.07px">&gt; W5300 Init</div>
<div class="t" style="left:9.5px;top:324.0px;line-height:14px;font-size:11px;color:#000;letter-spacing:-0.07px">&gt; Get Config: Addr = 803f800 Config = 15dc0800</div>
<div class="t" style="left:9.5px;top:338.0px;line-height:14px;font-size:11px;color:#000;letter-spacing:-0.07px">&gt; Restarted normally</div>
<div class="t" style="left:9.5px;top:352.0px;line-height:14px;font-size:11px;color:#000;letter-spacing:-0.07px">&gt; Setting Network Information</div>
<div class="t" style="left:9.5px;top:366.0px;line-height:14px;font-size:11px;color:#000;letter-spacing:-0.07px">&gt;</div>
<div class="t" style="left:57.3px;top:366.0px;line-height:14px;font-size:11px;color:#000;letter-spacing:-0.07px">=&gt; Local MAC Address Setted</div>
<div class="t" style="left:9.5px;top:380.0px;line-height:14px;font-size:11px;color:#000;letter-spacing:-0.07px">&gt;</div>
<div class="t" style="left:57.3px;top:380.0px;line-height:14px;font-size:11px;color:#000;letter-spacing:-0.07px">=&gt; Subnet Mask Setted</div>
<div class="t" style="left:9.5px;top:394.0px;line-height:14px;font-size:11px;color:#000;letter-spacing:-0.07px">&gt;</div>
<div class="t" style="left:57.3px;top:394.0px;line-height:14px;font-size:11px;color:#000;letter-spacing:-0.07px">=&gt; Gateway Address Setted</div>
<div class="t" style="left:9.5px;top:408.0px;line-height:14px;font-size:11px;color:#000;letter-spacing:-0.07px">&gt;</div>
<div class="t" style="left:57.3px;top:408.0px;line-height:14px;font-size:11px;color:#000;letter-spacing:-0.07px">=&gt; Local IP Address Setted</div>
<div class="t" style="left:9.5px;top:422.0px;line-height:14px;font-size:11px;color:#000;letter-spacing:-0.07px">&gt; Listen[CH0] 5000</div>
<div class="t" style="left:9.5px;top:436.0px;line-height:14px;font-size:11px;color:#000;letter-spacing:-0.07px">&gt; Listen[CH1] 5001</div>
<div class="t" style="left:9.5px;top:450.0px;line-height:14px;font-size:11px;color:#000;letter-spacing:-0.07px">&gt; Listen[CH2] 5002</div>
<div class="t" style="left:9.5px;top:464.0px;line-height:14px;font-size:11px;color:#000;letter-spacing:-0.07px">&gt; Listen[CH3] 5003</div>
<div style="left:736px;top:239px;width:16px;height:300px;background:linear-gradient(90deg,#F2F1EA,#FCFCF9 50%,#FBFBF8 80%,#EFEEE7)"></div>
<div style="left:736px;top:239px;width:16px;height:17px;border:1px solid #EDECE5;border-bottom-color:#DDDBD0;border-right-color:#E2E0D6;background:#F7F7F3;border-radius:2px"><svg width="16" height="17" style="position:absolute;left:-1px;top:-1px"><path d="M4.5 9.5 L8 6 L11.5 9.5" stroke="#CAC8BB" stroke-width="1.6" fill="none"/></svg></div>
<div style="left:736px;top:522px;width:16px;height:17px;border:1px solid #EDECE5;border-bottom-color:#DDDBD0;border-right-color:#E2E0D6;background:#F7F7F3;border-radius:2px"><svg width="16" height="17" style="position:absolute;left:-1px;top:-1px"><path d="M4.5 7 L8 10.5 L11.5 7" stroke="#CAC8BB" stroke-width="1.6" fill="none"/></svg></div>
<div style="left:4px;top:543px;width:750px;height:1px;background:#ACA899"></div>
<div class="gb" style="left:3px;top:549px;width:750px;height:35px"></div>
<div class="gl" style="left:10.5px;top:545.2px">Transmit</div>
<div class="btn" style="left:14px;top:560px;width:59px;height:15px;line-height:15px;font-size:9.5px;color:#000;text-indent:1px;padding-bottom:1.5px;line-height:13.5px">CLEAR</div>
<div class="btn" style="left:82px;top:560px;width:73px;height:15px;line-height:15px;font-size:9px;color:#000;">Send File</div>
<div class="chk" style="left:172px;top:562px"><svg width="13" height="13" style="position:absolute;left:-1px;top:-1px" shape-rendering="crispEdges"><path d="M9 3h1v1h-1zM8 4h2v1h-2zM3 5h1v1h-1zM7 5h3v1h-3zM3 6h2v1h-2zM6 6h3v1h-3zM3 7h5v1h-5zM4 8h3v1h-3zM5 9h1v1h-1z" fill="#000"/></svg></div>
<div class="t" style="left:190.6px;top:560.5px;line-height:14px;font-size:11px;color:#000;letter-spacing:-0.55px">CR=CR+LF</div>
<div class="led" style="left:642px;top:561px;width:20px;height:12px"><div class="ledi"></div></div>
<div class="t" style="left:665.5px;top:560.0px;line-height:14px;font-size:11px;color:#000;">DTR</div>
<div class="led" style="left:698px;top:561px;width:20px;height:12px"><div class="ledi"></div></div>
<div class="t" style="left:721.5px;top:560.0px;line-height:14px;font-size:11px;color:#000;">RTS</div>
<div class="gb" style="left:3px;top:590px;width:750px;height:34px"></div>
<div class="gl" style="left:10.0px;top:586.2px">Macros</div>
<div class="btn" style="left:12px;top:601px;width:73px;height:14px;line-height:14px;font-size:11px;color:#000;">Set Macros</div>
<div class="btn" style="left:108px;top:601px;width:32px;height:15px;line-height:15px;font-size:11px;color:#000;">M1</div>
<div class="btn" style="left:140px;top:601px;width:32px;height:15px;line-height:15px;font-size:11px;color:#000;">M2</div>
<div class="btn" style="left:172px;top:601px;width:32px;height:15px;line-height:15px;font-size:11px;color:#000;">M3</div>
<div class="btn" style="left:204px;top:601px;width:32px;height:15px;line-height:15px;font-size:11px;color:#000;">M4</div>
<div class="btn" style="left:236px;top:601px;width:32px;height:15px;line-height:15px;font-size:11px;color:#000;">M5</div>
<div class="btn" style="left:268px;top:601px;width:32px;height:15px;line-height:15px;font-size:11px;color:#000;">M6</div>
<div class="btn" style="left:300px;top:601px;width:32px;height:15px;line-height:15px;font-size:11px;color:#000;">M7</div>
<div class="btn" style="left:332px;top:601px;width:32px;height:15px;line-height:15px;font-size:11px;color:#000;">M8</div>
<div class="btn" style="left:364px;top:601px;width:32px;height:15px;line-height:15px;font-size:11px;color:#000;">M9</div>
<div class="btn" style="left:396px;top:601px;width:32px;height:15px;line-height:15px;font-size:11px;color:#000;">M10</div>
<div class="btn" style="left:428px;top:601px;width:32px;height:15px;line-height:15px;font-size:11px;color:#000;">M11</div>
<div class="btn" style="left:460px;top:601px;width:32px;height:15px;line-height:15px;font-size:11px;color:#000;">M12</div>
<div style="left:4px;top:630px;width:750px;height:1px;background:#ACA899"></div>
<div style="left:4px;top:631px;width:750px;height:1px;background:#fff"></div>
<div class="ed" style="left:8px;top:633px;width:657px;height:21px;background:#fff"><div class="t" style="left:2.5px;top:-1.5px;line-height:21px;font-size:11px;letter-spacing:-0.3px">1234+567890+</div></div>
<div class="btn" style="left:682px;top:637px;width:60px;height:14px;line-height:14px;font-size:9.2px;color:#000;-webkit-text-stroke:0.15px #000">-&gt; Send</div>
<div class="ed" style="left:5px;top:658px;width:748px;height:48px;background:#D4D0C8"></div>
<div style="left:736px;top:659px;width:16px;height:45px;background:linear-gradient(90deg,#F2F1EA,#FCFCF9 50%,#FBFBF8 80%,#EFEEE7)"></div>
<div style="left:736px;top:659px;width:16px;height:17px;border:1px solid #EDECE5;border-bottom-color:#DDDBD0;border-right-color:#E2E0D6;background:#F7F7F3;border-radius:2px"><svg width="16" height="17" style="position:absolute;left:-1px;top:-1px"><path d="M4.5 9.5 L8 6 L11.5 9.5" stroke="#CAC8BB" stroke-width="1.6" fill="none"/></svg></div>
<div style="left:736px;top:687px;width:16px;height:17px;border:1px solid #EDECE5;border-bottom-color:#DDDBD0;border-right-color:#E2E0D6;background:#F7F7F3;border-radius:2px"><svg width="16" height="17" style="position:absolute;left:-1px;top:-1px"><path d="M4.5 7 L8 10.5 L11.5 7" stroke="#CAC8BB" stroke-width="1.6" fill="none"/></svg></div>
<div style="left:4px;top:709px;width:129px;height:17px;border:1px solid;border-color:#ACA899 #fff #fff #ACA899"></div>
<div class="t" style="left:6.6px;top:710.6px;line-height:14px;font-size:11px;color:#000;">Connected</div>
<div style="left:136px;top:709px;width:57px;height:17px;border:1px solid;border-color:#ACA899 #fff #fff #ACA899"></div>
<div class="t" style="left:138.6px;top:710.6px;line-height:14px;font-size:11px;color:#000;">Rx: 2933</div>
<div style="left:196px;top:709px;width:57px;height:17px;border:1px solid;border-color:#ACA899 #fff #fff #ACA899"></div>
<div class="t" style="left:198.6px;top:710.6px;line-height:14px;font-size:11px;color:#000;">Tx: 0</div>
<div style="left:256px;top:709px;width:47px;height:17px;border:1px solid;border-color:#ACA899 #fff #fff #ACA899"></div>
<div style="left:306px;top:709px;width:448px;height:17px;border:1px solid;border-color:#ACA899 #fff #fff #ACA899"></div>
<svg style="position:absolute;left:738px;top:710px" width="16" height="16"><path d="M15 3.5 L3.5 15 M15 7.5 L7.5 15 M15 11.5 L11.5 15" stroke="#FFFFFF" stroke-width="1"/><path d="M15 4.5 L4.5 15 M15 8.5 L8.5 15 M15 12.5 L12.5 15" stroke="#A9A698" stroke-width="1.4"/></svg>
<div style="left:0;top:29px;width:4px;height:701px;background:linear-gradient(90deg,#0030C0 0,#0030C0 1px,#0A52F0 1px,#0848E8 3px,#0040D8 4px)"></div>
<div style="left:754px;top:29px;width:4px;height:701px;background:linear-gradient(90deg,#0040D8 0,#0848E8 1px,#0A4EEA 2px,#0034C8 3px,#0020A0 4px)"></div>
<div style="left:0;top:726px;width:758px;height:4px;background:linear-gradient(#0040D8 0,#0848E8 1px,#0A4EEA 2px,#0034C8 3px,#0020A0 4px)"></div>
</div></body></html>
